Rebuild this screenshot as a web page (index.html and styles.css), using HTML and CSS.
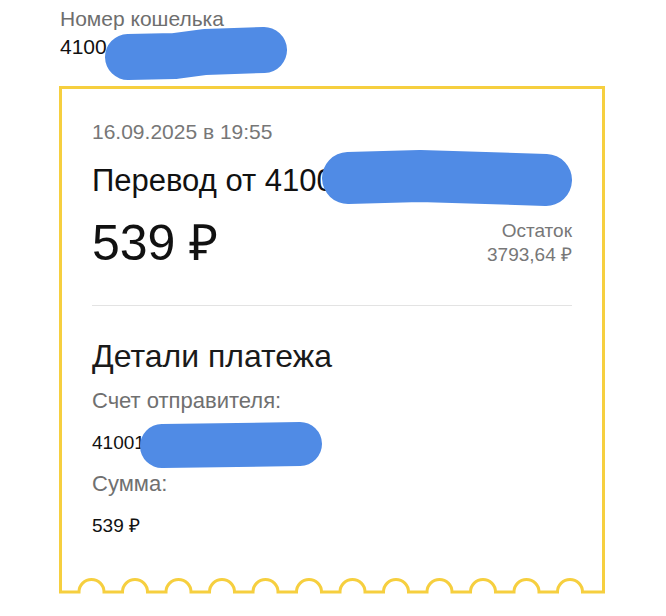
FILE: index.html
```html
<!DOCTYPE html>
<html lang="ru">
<head>
    <meta charset="UTF-8">
    <meta name="viewport" content="width=device-width, initial-scale=1.0">
    <title>Перевод</title>
    <link rel="stylesheet" href="styles.css">
</head>
<body>

    <div class="wallet">
        <div class="wallet-label">Номер кошелька</div>
        <div class="wallet-number">
            4100
            <svg class="blur blur-wallet" width="182" height="54" viewBox="0 0 182 54">
                <polyline points="23,30 70,29 100,25 159,23" />
            </svg>
        </div>
    </div>

    <div class="receipt">
        <div class="receipt-body">
            <div class="date">16.09.2025 в 19:55</div>
            <div class="title">
                Перевод от 4100
                <svg class="blur blur-title" width="250" height="56" viewBox="0 0 250 56">
                    <polyline points="26,28 98,26 224,30" />
                </svg>
            </div>

            <div class="amount-row">
                <div class="amount">539 ₽</div>
                <div class="balance">
                    <div>Остаток</div>
                    <div class="balance-value">3793,64 ₽</div>
                </div>
            </div>

            <hr class="divider">

            <h2 class="details-title">Детали платежа</h2>

            <div class="field-label">Счет отправителя:</div>
            <div class="field-value">
                41001
                <svg class="blur blur-sender" width="182" height="46" viewBox="0 0 182 46">
                    <polyline points="22,24 160,22" />
                </svg>
            </div>

            <div class="field-label">Сумма:</div>
            <div class="field-value">539 ₽</div>
        </div>

        <!-- zigzag bottom edge of the receipt -->
        <svg class="receipt-edge" width="546" height="18" viewBox="0 0 546 18">
            <path d="M1.5 0 V15 H20 A12.5 12.5 0 0 1 45 15 H63.5 A12.5 12.5 0 0 1 88.5 15 H107 A12.5 12.5 0 0 1 132 15 H150.5 A12.5 12.5 0 0 1 175.5 15 H194 A12.5 12.5 0 0 1 219 15 H237.5 A12.5 12.5 0 0 1 262.5 15 H281 A12.5 12.5 0 0 1 306 15 H324.5 A12.5 12.5 0 0 1 349.5 15 H368 A12.5 12.5 0 0 1 393 15 H411.5 A12.5 12.5 0 0 1 436.5 15 H455 A12.5 12.5 0 0 1 480 15 H498.5 A12.5 12.5 0 0 1 523.5 15 H544.5 V0" />
        </svg>
    </div>

</body>
</html>
```

FILE: styles.css
```css
* {
    padding: 0;
    margin: 0;
    box-sizing: border-box;
}

body {
    font-family: "Liberation Sans", Arial, sans-serif;
    background-color: #fff;
    color: #111;
    padding: 5px 59px 0;
}

/* Wallet header */
.wallet-label {
    font-size: 21px;
    line-height: 28px;
    color: #6e6e6e;
    padding-left: 1px;
}

.wallet-number {
    position: relative;
    font-size: 21px;
    line-height: 28px;
    padding-left: 1px;
}

/* Blue marker scribbles hiding numbers */
.blur {
    position: absolute;
}

.blur polyline {
    fill: none;
    stroke: #508be5;
    stroke-linecap: round;
    stroke-linejoin: round;
}

.blur-wallet {
    left: 46px;
    top: -6px;
}

.blur-wallet polyline {
    stroke-width: 46;
}

.blur-title {
    left: 230px;
    top: -15px;
}

.blur-title polyline {
    stroke-width: 52;
}

.blur-sender {
    left: 48px;
    top: -10px;
}

.blur-sender polyline {
    stroke-width: 44;
}

/* Receipt card */
.receipt {
    width: 546px;
    margin-top: 25px;
}

.receipt-body {
    border: 3px solid #f6cf3f;
    border-bottom: none;
    padding: 32px 30px 40px;
}

.receipt-edge {
    display: block;
}

.receipt-edge path {
    fill: none;
    stroke: #f6cf3f;
    stroke-width: 3;
}

.date {
    font-size: 21px;
    line-height: 22px;
    color: #777;
}

.title {
    position: relative;
    margin-top: 22px;
    font-size: 31px;
    line-height: 32px;
}

.amount-row {
    display: flex;
    justify-content: space-between;
    align-items: flex-start;
    margin-top: 20px;
}

.amount {
    font-size: 50px;
    line-height: 52px;
}

.balance {
    margin-top: 2px;
    text-align: right;
    font-size: 19px;
    line-height: 24px;
    color: #777;
}

.divider {
    border: none;
    border-top: 1px solid #e3e3e3;
    margin-top: 36px;
}

.details-title {
    margin-top: 34px;
    font-size: 32px;
    line-height: 32px;
    font-weight: normal;
    color: #1a1a1a;
}

.field-label {
    margin-top: 17px;
    font-size: 22px;
    line-height: 24px;
    color: #707070;
}

.field-value {
    position: relative;
    margin-top: 19px;
    font-size: 19px;
    line-height: 22px;
}

.field-value + .field-label {
    margin-top: 18px;
}
```
